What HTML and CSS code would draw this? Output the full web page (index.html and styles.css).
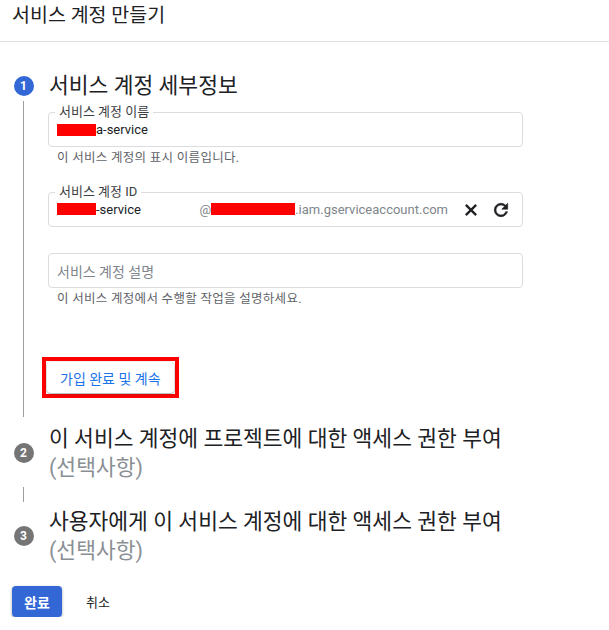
FILE: index.html
```html
<!DOCTYPE html>
<html lang="ko">
<head>
    <meta charset="UTF-8">
    <meta name="viewport" content="width=device-width, initial-scale=1.0">
    <title>서비스 계정 만들기</title>
    <link rel="stylesheet" href="styles.css">
</head>
<body>
    <header class="page-header">
        <h1>서비스 계정 만들기</h1>
    </header>

    <main class="stepper">
        <!-- step 1: active -->
        <section class="step">
            <div class="step-rail">
                <span class="step-num step-num-active">1</span>
            </div>
            <h2 class="step-title">서비스 계정 세부정보</h2>

            <div class="step-rail">
                <div class="rail-line"></div>
            </div>
            <div class="step-body">
                <div class="field">
                    <span class="field-label">서비스 계정 이름</span>
                    <span class="redact redact-short"></span><span class="field-value">a-service</span>
                </div>
                <p class="field-hint">이 서비스 계정의 표시 이름입니다.</p>

                <div class="field field-id">
                    <span class="field-label">서비스 계정 ID</span>
                    <span class="field-main"><span class="redact redact-id"></span><span class="field-value">-service</span></span>
                    <span class="field-suffix">@<span class="redact redact-long"></span>.iam.gserviceaccount.com</span>
                    <button class="icon-btn" type="button" aria-label="지우기">
                        <svg viewBox="0 0 24 24" width="20" height="20"><path class="stroke" d="M5.8 5.8L18.2 18.2M18.2 5.8L5.8 18.2"/></svg>
                    </button>
                    <button class="icon-btn" type="button" aria-label="새로고침">
                        <svg viewBox="0 0 24 24" width="20" height="20"><path class="fill" d="M17.65 6.35C16.2 4.9 14.21 4 12 4c-4.42 0-7.99 3.58-7.99 8s3.57 8 7.99 8c3.73 0 6.84-2.55 7.73-6h-2.08c-.82 2.33-3.04 4-5.65 4-3.31 0-6-2.69-6-6s2.69-6 6-6c1.66 0 3.14.69 4.22 1.78L13 11h7V4l-2.35 2.35z"/></svg>
                    </button>
                </div>

                <div class="field field-empty">
                    <span class="field-placeholder">서비스 계정 설명</span>
                </div>
                <p class="field-hint">이 서비스 계정에서 수행할 작업을 설명하세요.</p>

                <div class="highlight">
                    <button class="continue-btn" type="button">가입 완료 및 계속</button>
                </div>
            </div>
        </section>

        <!-- step 2 -->
        <section class="step step-optional">
            <div class="step-rail">
                <span class="step-num">2</span>
            </div>
            <h2 class="step-title">이 서비스 계정에 프로젝트에 대한 액세스 권한 부여<span class="optional">(선택사항)</span></h2>
        </section>

        <div class="step-connector">
            <div class="rail-line"></div>
        </div>

        <!-- step 3 -->
        <section class="step">
            <div class="step-rail">
                <span class="step-num">3</span>
            </div>
            <h2 class="step-title">사용자에게 이 서비스 계정에 대한 액세스 권한 부여<span class="optional">(선택사항)</span></h2>
        </section>
    </main>

    <footer class="actions">
        <button class="btn-primary" type="button">완료</button>
        <button class="btn-text" type="button">취소</button>
    </footer>
</body>
</html>
```

FILE: styles.css
```css
* {
    margin: 0;
    padding: 0;
    box-sizing: border-box;
}

body {
    font-family: Roboto, "Noto Sans CJK KR", sans-serif;
    color: #202124;
    background: white;
    width: 609px;
}

button {
    font-family: inherit;
    cursor: pointer;
}

.page-header {
    height: 42px;
    border-bottom: 1px solid #e0e0e0;
    padding: 3px 12px 0;
}

.page-header h1 {
    font-size: 19.5px;
    font-weight: 400;
    line-height: 26px;
}

.stepper {
    padding-top: 29px;
}

.step {
    display: grid;
    grid-template-columns: 47px 1fr;
}

.step-rail {
    display: flex;
    justify-content: center;
    align-items: center;
}

.rail-line {
    width: 1px;
    align-self: stretch;
    background: #9e9e9e;
}

.step-num {
    width: 20px;
    height: 20px;
    border-radius: 50%;
    background: #757575;
    color: white;
    font-size: 12px;
    font-weight: 700;
    display: flex;
    align-items: center;
    justify-content: center;
    font-family: Roboto, sans-serif;
}

.step-num-active {
    background: #3367d6;
}

.step-title {
    font-size: 21.5px;
    font-weight: 400;
    line-height: 30px;
    padding-left: 2px;
}

.step-optional {
    margin-top: 7px;
}

.step-optional .step-title,
.step-connector + .step .step-title {
    line-height: 29px;
}

.optional {
    display: block;
    color: #8a8f94;
}

.step-body {
    padding: 11px 86px 19px 1px;
}

.field {
    position: relative;
    height: 35px;
    border: 1px solid #dadce0;
    border-radius: 4px;
    display: flex;
    align-items: center;
    padding: 0 8px 0 8px;
    font-size: 13px;
}

.field-label {
    position: absolute;
    top: -10px;
    left: 6px;
    padding: 0 4px;
    background: white;
    font-size: 13px;
    line-height: 17px;
    color: #3c4043;
}

.field-value {
    color: #202124;
}

.redact {
    display: inline-block;
    height: 12px;
    background: #ff0000;
    vertical-align: -1px;
}

.redact-short {
    width: 39px;
}

.redact-id {
    width: 39px;
}

.redact-long {
    width: 84px;
}

.field-id {
    margin-top: 27px;
}

.field-main {
    flex: 1;
}

.field-suffix {
    color: #80868b;
    margin-right: 6px;
}

.icon-btn {
    border: none;
    background: none;
    width: 26px;
    height: 26px;
    display: flex;
    align-items: center;
    justify-content: center;
    margin-left: 4px;
}

.icon-btn .stroke {
    fill: none;
    stroke: #202124;
    stroke-width: 2.8;
}

.icon-btn .fill {
    fill: #202124;
    stroke: #202124;
    stroke-width: 0.8;
}

.field-empty {
    margin-top: 26px;
    font-size: 14px;
}

.field-placeholder {
    color: #80868b;
}

.field-hint {
    font-size: 12.5px;
    letter-spacing: 0.3px;
    line-height: 14px;
    color: #5f6368;
    margin-top: 4px;
    padding-left: 9px;
}

.highlight {
    display: inline-block;
    margin: 51px 0 0 -6px;
    border: 4px solid #ff0000;
    padding: 1px;
}

.continue-btn {
    display: block;
    height: 31px;
    padding: 0 13px;
    background: white;
    border: none;
    border-radius: 4px;
    box-shadow: 0 1px 2px rgba(60, 64, 67, 0.3), 0 1px 3px 1px rgba(60, 64, 67, 0.15);
    color: #1a73e8;
    font-size: 14px;
}

.step-connector {
    display: flex;
    width: 47px;
    justify-content: center;
    height: 25px;
    padding: 5px 0;
}

.actions {
    display: flex;
    gap: 12px;
    padding: 21px 12px 0;
}

.btn-primary {
    width: 50px;
    height: 31px;
    border: none;
    border-radius: 4px;
    background: #3367d6;
    color: white;
    font-size: 14px;
    font-weight: 700;
    box-shadow: 0 1px 3px rgba(0, 0, 0, 0.35);
}

.btn-text {
    border: none;
    background: none;
    padding: 0 12px;
    font-size: 13px;
    color: #202124;
}
```
